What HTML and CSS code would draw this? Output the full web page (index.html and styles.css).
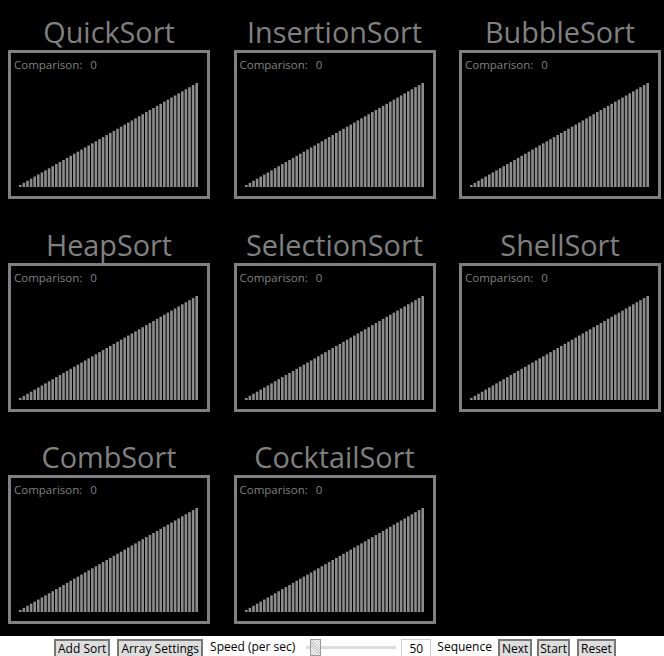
FILE: index.html
```html
<!DOCTYPE html>
<html lang="en">
<head>
    <meta charset="UTF-8">
    <meta name="viewport" content="width=device-width, initial-scale=1.0">
    <title>Sort Visualizer</title>
    <link rel="stylesheet" href="styles.css">
</head>
<body>
    <div class="board" id="board"></div>
    <div class="controls">
        <button class="ctrl-btn add-btn">Add Sort</button>
        <button class="ctrl-btn settings-btn">Array Settings</button>
        <span class="speed-label">Speed (per sec)</span>
        <input class="speed-slider" type="range" min="0" max="1000" value="50">
        <input class="speed-input" type="text" value="50">
        <span class="seq-label">Sequence</span>
        <button class="ctrl-btn next-btn">Next</button>
        <button class="ctrl-btn start-btn">Start</button>
        <button class="ctrl-btn reset-btn">Reset</button>
    </div>
    <script src="script.js"></script>
</body>
</html>
```

FILE: styles.css
```css
html, body {
    height: 100%;
    overflow: hidden;
}
body {
    margin: 0;
    background-color: #fff;
    font-family: "Open Sans", "Noto Sans", sans-serif;
    display: flex;
    flex-direction: column;
}
.board {
    flex: none;
    height: 636px;
    box-sizing: border-box;
    background-color: #000;
    padding: 14px 2px 0 8px;
    display: grid;
    grid-template-columns: repeat(3, 202px);
    grid-auto-rows: 149px;
    column-gap: 23.5px;
    row-gap: 63.5px;
}
.sort-card {
    display: flex;
    flex-direction: column;
    height: 185px;
}
.sort-title {
    height: 36px;
    line-height: 35px;
    text-align: center;
    font-size: 28.8px;
    color: #808080;
    white-space: nowrap;
}
.sort-box {
    height: 149px;
    box-sizing: border-box;
    border: 3px solid #808080;
    padding: 3px 9px 9px 3px;
    display: flex;
    flex-direction: column;
}
.comparison {
    font-size: 11.5px;
    line-height: 18px;
    color: #808080;
    word-spacing: 5px;
}
.bars {
    flex: 1;
    display: flex;
    align-items: flex-end;
    margin-left: 5px;
}
.bars rect {
    fill: #8c8c8c;
}
.controls {
    flex: 1;
    display: flex;
    align-items: flex-start;
    padding: 3px 0 0 54px;
    font-size: 12px;
    line-height: 16px;
    color: #000;
    white-space: nowrap;
}
.ctrl-btn {
    height: 17px;
    padding: 0 2px;
    box-sizing: border-box;
    border: 2px solid #777;
    border-bottom: none;
    background-color: #ddd;
    color: #000;
    font-family: inherit;
    font-size: 12px;
    line-height: 15px;
}
.settings-btn { margin-left: 7px; }
.speed-label { margin-left: 7px; }
.speed-slider {
    -webkit-appearance: none;
    appearance: none;
    width: 90px;
    height: 17px;
    margin: 0 0 0 11px;
    background: transparent;
}
.speed-slider::-webkit-slider-runnable-track {
    height: 3px;
    background-color: #ddd;
}
.speed-slider::-webkit-slider-thumb {
    -webkit-appearance: none;
    width: 11px;
    height: 17px;
    margin-top: -7px;
    background: repeating-linear-gradient(45deg, #f0f0f0 0 1px, #ccc 1px 2px);
    border: 1px solid #999;
    box-sizing: border-box;
}
.speed-input {
    width: 30px;
    height: 17px;
    box-sizing: border-box;
    margin-left: 5px;
    padding: 0;
    border: 1px solid #ccc;
    border-bottom: none;
    text-align: center;
    font-family: inherit;
    font-size: 12px;
}
.seq-label { margin-left: 6px; }
.next-btn { margin-left: 6px; }
.start-btn { margin-left: 5px; padding: 0 1px; }
.reset-btn { margin-left: 7px; }
```

FILE: script.js
```js
var sorts = ["QuickSort", "InsertionSort", "BubbleSort", "HeapSort", "SelectionSort", "ShellSort", "CombSort", "CocktailSort"];
var board = document.getElementById("board");

sorts.forEach(function (name) {
    var card = document.createElement("div");
    card.className = "sort-card";
    var rects = "";
    // 50 bars, sorted ascending
    for (var i = 1; i <= 50; i++) {
        var h = i * 2.08;
        rects += '<rect x="' + ((i - 1) * 3.6) + '" y="' + (104 - h) + '" width="2.6" height="' + h + '"></rect>';
    }
    card.innerHTML = '<div class="sort-title">' + name + '</div><div class="sort-box">' +
        '<div class="comparison">Comparison: 0</div><div class="bars">' +
        '<svg width="179" height="104">' + rects + '</svg></div></div>';
    board.appendChild(card);
});
```
